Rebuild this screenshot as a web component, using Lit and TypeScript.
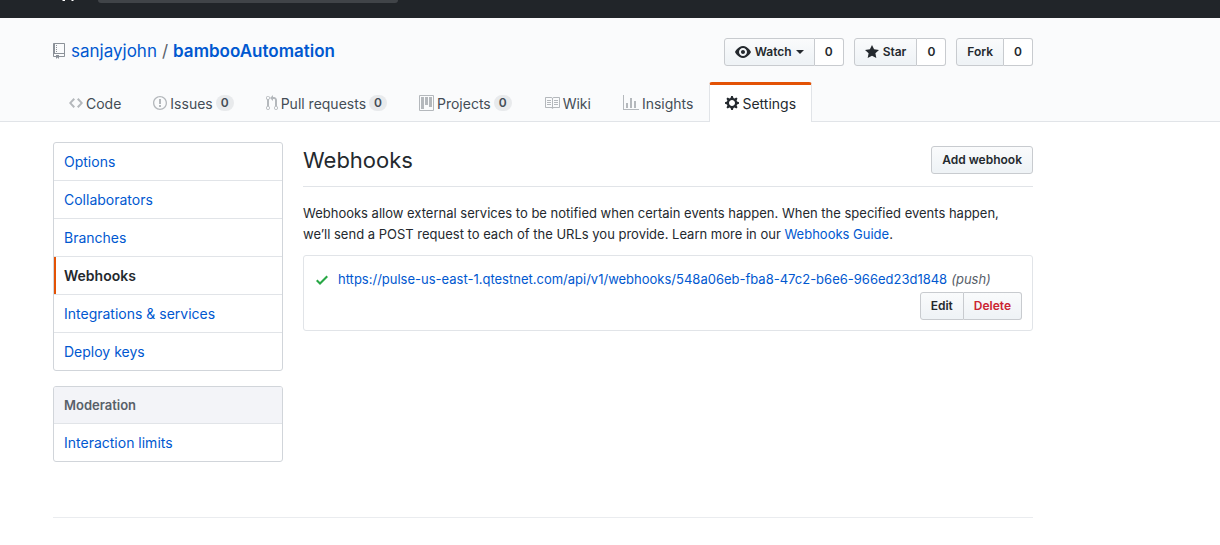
import { LitElement, html, css, svg } from "lit";
import { customElement, property } from "lit/decorators.js";

const ICONS: Record<string, [number, string]> = {
  repo: [12, "M4 9H3V8h1v1zm0-3H3v1h1V6zm0-2H3v1h1V4zm0-2H3v1h1V2zm8-1v12c0 .55-.45 1-1 1H6v2l-1.5-1.5L3 16v-2H1c-.55 0-1-.45-1-1V1c0-.55.45-1 1-1h10c.55 0 1 .45 1 1zm-1 10H1v2h2v-1h3v1h5v-2zm0-10H2v9h9V1z"],
  eye: [16, "M8.06 2C3 2 0 8 0 8s3 6 8.06 6C13 14 16 8 16 8s-3-6-7.94-6zM8 12c-2.2 0-4-1.78-4-4 0-2.2 1.8-4 4-4 2.22 0 4 1.8 4 4 0 2.22-1.78 4-4 4zm2-4c0 1.11-.89 2-2 2-1.11 0-2-.89-2-2 0-1.11.89-2 2-2 1.11 0 2 .89 2 2z"],
  star: [14, "M14 6l-4.9-.64L7 1 4.9 5.36 0 6l3.6 3.26L2.67 14 7 11.67 11.33 14l-.93-4.74L14 6z"],
  code: [14, "M9.5 3L8 4.5 11.5 8 8 11.5 9.5 13 14 8 9.5 3zm-5 0L0 8l4.5 5L6 11.5 2.5 8 6 4.5 4.5 3z"],
  issue: [14, "M7 2.3c3.14 0 5.7 2.56 5.7 5.7s-2.56 5.7-5.7 5.7A5.71 5.71 0 0 1 1.3 8c0-3.14 2.56-5.7 5.7-5.7zM7 1C3.14 1 0 4.14 0 8s3.14 7 7 7 7-3.14 7-7-3.14-7-7-7zm1 3H6v5h2V4zm0 6H6v2h2v-2z"],
  pull: [12, "M11 11.28V5c-.03-.78-.34-1.47-.94-2.06C9.46 2.35 8.78 2.03 8 2H7V0L4 3l3 3V4h1c.27.02.48.11.69.31.21.2.3.42.31.69v6.28A1.993 1.993 0 0 0 10 15a1.993 1.993 0 0 0 1-3.72zm-1 2.92c-.66 0-1.2-.55-1.2-1.2 0-.65.55-1.2 1.2-1.2.65 0 1.2.55 1.2 1.2 0 .65-.55 1.2-1.2 1.2zM4 3c0-1.11-.89-2-2-2a1.993 1.993 0 0 0-1 3.72v6.56A1.993 1.993 0 0 0 2 15a1.993 1.993 0 0 0 1-3.72V4.72c.59-.34 1-.98 1-1.72zm-.8 10c0 .66-.55 1.2-1.2 1.2-.65 0-1.2-.55-1.2-1.2 0-.65.55-1.2 1.2-1.2.65 0 1.2.55 1.2 1.2zM2 4.2C1.34 4.2.8 3.65.8 3c0-.65.55-1.2 1.2-1.2.65 0 1.2.55 1.2 1.2 0 .65-.55 1.2-1.2 1.2z"],
  project: [15, "M10 12h3V2h-3v10zm-4-2h3V2H6v8zm-4 4h3V2H2v12zm-1 1h13V1H1v14zM14 0H1a1 1 0 0 0-1 1v14a1 1 0 0 0 1 1h13a1 1 0 0 0 1-1V1a1 1 0 0 0-1-1z"],
  book: [16, "M3 5h4v1H3V5zm0 3h4V7H3v1zm0 2h4V9H3v1zm11-5h-4v1h4V5zm0 2h-4v1h4V7zm0 2h-4v1h4V9zm2-6v9c0 .55-.45 1-1 1H9.5l-1 1-1-1H2c-.55 0-1-.45-1-1V3c0-.55.45-1 1-1h5.5l1 1 1-1H15c.55 0 1 .45 1 1zm-8 .5L7.5 3H2v9h6V3.5zm7-.5H9.5l-.5.5V12h6V3z"],
  graph: [16, "M16 14v1H0V0h1v14h15zM5 13H3V8h2v5zm4 0H7V3h2v10zm4 0h-2V6h2v7z"],
  gear: [14, "M14 8.77v-1.6l-1.94-.64-.45-1.09.88-1.84-1.13-1.13-1.81.91-1.09-.45-.69-1.92h-1.6l-.63 1.94-1.11.45-1.84-.88-1.13 1.13.91 1.81-.45 1.09L0 7.23v1.59l1.94.64.45 1.09-.88 1.84 1.13 1.13 1.81-.91 1.09.45.69 1.92h1.59l.63-1.94 1.11-.45 1.84.88 1.13-1.13-.92-1.81.47-1.09L14 8.75v.02zM7 11c-1.66 0-3-1.34-3-3s1.34-3 3-3 3 1.34 3 3-1.34 3-3 3z"],
  check: [12, "M12 5l-8 8-4-4 1.5-1.5L4 10l6.5-6.5L12 5z"],
};

@customElement("oct-icon")
class OctIcon extends LitElement {
  @property() name = "repo";
  static styles = css`
    :host { display: inline-flex; flex: none; }
    svg { display: block; fill: currentColor; }
  `;
  render() {
    const [w, d] = ICONS[this.name];
    return html`<svg width=${w} height="16" viewBox="0 0 ${w} 16" aria-hidden="true">${svg`<path fill-rule="evenodd" d=${d}></path>`}</svg>`;
  }
}

const TABS: { icon: string; label: string; count?: number; active?: boolean }[] = [
  { icon: "code", label: "Code" },
  { icon: "issue", label: "Issues", count: 0 },
  { icon: "pull", label: "Pull requests", count: 0 },
  { icon: "project", label: "Projects", count: 0 },
  { icon: "book", label: "Wiki" },
  { icon: "graph", label: "Insights" },
  { icon: "gear", label: "Settings", active: true },
];

const MENU = ["Options", "Collaborators", "Branches", "Webhooks", "Integrations & services", "Deploy keys"];

@customElement("app-root")
class AppRoot extends LitElement {
  static styles = css`
    :host {
      display: block;
      font-family: Inter, "Liberation Sans", sans-serif;
      font-size: 14px;
      line-height: 21px;
      color: #24292e;
      background: #fff;
    }
    * { box-sizing: border-box; }
    a { color: #0058d0; text-decoration: none; }
    h1, h2, p, ul { margin: 0; padding: 0; font-weight: 400; }
    ul { list-style: none; }
    .wrap { max-width: 1033px; padding-left: 53px; }

    .topbar { display: flex; align-items: flex-start; gap: 22px; height: 18px; padding-left: 60px; background: #212529; }
    .mark { display: block; width: 16px; height: 2px; fill: #fff; }
    .search { width: 300px; height: 3px; padding: 0 8px; border: 0; border-radius: 0 0 3px 3px; background: #404448; color: #fff; }

    .pagehead { background: #fafbfc; border-bottom: 1px solid #e1e4e8; padding-top: 20px; }
    .title-row { display: flex; justify-content: space-between; align-items: flex-start; height: 44px; }
    .title { display: flex; align-items: center; font-size: 17px; line-height: 26px; }
    .title oct-icon { color: #8b9198; margin-right: 6px; }
    .title .slash { margin: 0 5px; color: #586069; }
    .title .name { font-weight: 600; }
    .actions { display: flex; gap: 10px; }
    .group { display: flex; }

    .btn {
      display: inline-flex; align-items: center; justify-content: center; gap: 4px;
      height: 28px; padding: 0 10px;
      font-family: inherit; font-size: 12px; font-weight: 600; line-height: 20px; color: #24292e;
      border: 1px solid #c8cbcf; border-radius: 3px;
      background: linear-gradient(#fafbfc, #eff3f6 90%);
      white-space: nowrap;
    }
    .group > :first-child { border-radius: 3px 0 0 3px; }
    .group > :last-child { border-radius: 0 3px 3px 0; border-left: 0; }
    .btn.count { background: #fff; }
    .btn.danger { color: #cb2431; }
    .caret { width: 0; border: 4px solid transparent; border-top-color: currentColor; border-bottom: 0; }

    .tabs { display: flex; margin-bottom: -1px; }
    .tab {
      display: flex; align-items: center; gap: 3px; height: 40px; padding: 2px 15px 0;
      border: 1px solid transparent; border-width: 0 1px; color: #444d56; white-space: nowrap;
    }
    .tab oct-icon { color: #b4b8bc; }
    .tab.active { padding: 0 15px 1px; border-top: 3px solid #e35205; border-color: #e35205 #e1e4e8; border-radius: 3px 3px 0 0; background: #fff; color: #24292e; }
    .tab.active oct-icon { color: #24292e; }
    .pill { padding: 0 5px; border-radius: 10px; background: #e8eaec; font-size: 12px; font-weight: 600; line-height: 16px; text-align: center; }

    .body { display: grid; grid-template-columns: 230px minmax(0, 1fr); gap: 20px; padding-top: 20px; }
    .side { display: grid; gap: 15px; align-content: start; }
    .menu { border: 1px solid #d1d5da; border-radius: 3px; overflow: hidden; }
    .menu li + li { border-top: 1px solid #e1e4e8; }
    .menu a { display: block; padding: 8px 10px; }
    .menu .current { padding-left: 8px; border-left: 2px solid #e35205; font-weight: 600; color: #24292e; }
    .menu .heading { padding: 8px 10px; font-size: 13px; font-weight: 600; line-height: 20px; color: #586069; background: #f3f4f8; }

    .subhead { display: flex; justify-content: space-between; align-items: flex-start; padding: 4px 0 12px; border-bottom: 1px solid #e1e4e8; }
    .subhead h2 { font-size: 22px; line-height: 28px; }
    .intro { margin: 16px 0 10px; font-size: 13px; }
    .hooks { border: 1px solid #e1e4e8; border-radius: 3px; padding: 13px 10px 10px 12px; }
    .hook { display: flex; align-items: center; font-size: 13px; white-space: nowrap; }
    .hook oct-icon { color: #28a745; margin-right: 10px; }
    .hook em { margin-left: 4px; color: #586069; }
    .hook-actions { display: flex; justify-content: flex-end; margin-top: 2px; }
    .footer { margin-top: 55px; border-top: 1px solid #eaecef; height: 28px; }
  `;

  render() {
    return html`
      <header class="topbar">
        <svg class="mark" viewBox="0 0 16 2" aria-hidden="true"><path d="M2 0h3v1H3zM11 0h3l-1 1h-1z"></path></svg>
        <input class="search" type="search" aria-label="Search" />
      </header>
      <div class="pagehead">
        <div class="wrap">
          <div class="title-row">
            <h1 class="title">
              <oct-icon name="repo"></oct-icon>
              <a href="#">sanjayjohn</a><span class="slash">/</span><a class="name" href="#">bambooAutomation</a>
            </h1>
            <div class="actions">
              <div class="group">
                <button class="btn"><oct-icon name="eye"></oct-icon>Watch<span class="caret"></span></button>
                <a class="btn count" href="#">0</a>
              </div>
              <div class="group">
                <button class="btn"><oct-icon name="star"></oct-icon>Star</button>
                <a class="btn count" href="#">0</a>
              </div>
              <div class="group">
                <button class="btn">Fork</button>
                <a class="btn count" href="#">0</a>
              </div>
            </div>
          </div>
          <nav class="tabs">
            ${TABS.map((t) => html`<a class="tab ${t.active ? "active" : ""}" href="#"><oct-icon name=${t.icon}></oct-icon><span>${t.label}</span>${t.count === undefined ? "" : html`<span class="pill">${t.count}</span>`}</a>`)}
          </nav>
        </div>
      </div>
      <div class="wrap">
        <div class="body">
          <aside class="side">
            <ul class="menu">
              ${MENU.map((m) => html`<li><a class=${m === "Webhooks" ? "current" : ""} href="#">${m}</a></li>`)}
            </ul>
            <ul class="menu">
              <li class="heading">Moderation</li>
              <li><a href="#">Interaction limits</a></li>
            </ul>
          </aside>
          <main>
            <div class="subhead">
              <h2>Webhooks</h2>
              <button class="btn">Add webhook</button>
            </div>
            <p class="intro">
              Webhooks allow external services to be notified when certain events happen. When the specified events happen,<br />
              we’ll send a POST request to each of the URLs you provide. Learn more in our <a href="#">Webhooks Guide</a>.
            </p>
            <div class="hooks">
              <div class="hook">
                <oct-icon name="check"></oct-icon>
                <a href="#">https://pulse-us-east-1.qtestnet.com/api/v1/webhooks/548a06eb-fba8-47c2-b6e6-966ed23d1848</a>
                <em>(push)</em>
              </div>
              <div class="hook-actions">
                <div class="group">
                  <button class="btn">Edit</button>
                  <button class="btn danger">Delete</button>
                </div>
              </div>
            </div>
          </main>
        </div>
        <footer class="footer"></footer>
      </div>
    `;
  }
}
